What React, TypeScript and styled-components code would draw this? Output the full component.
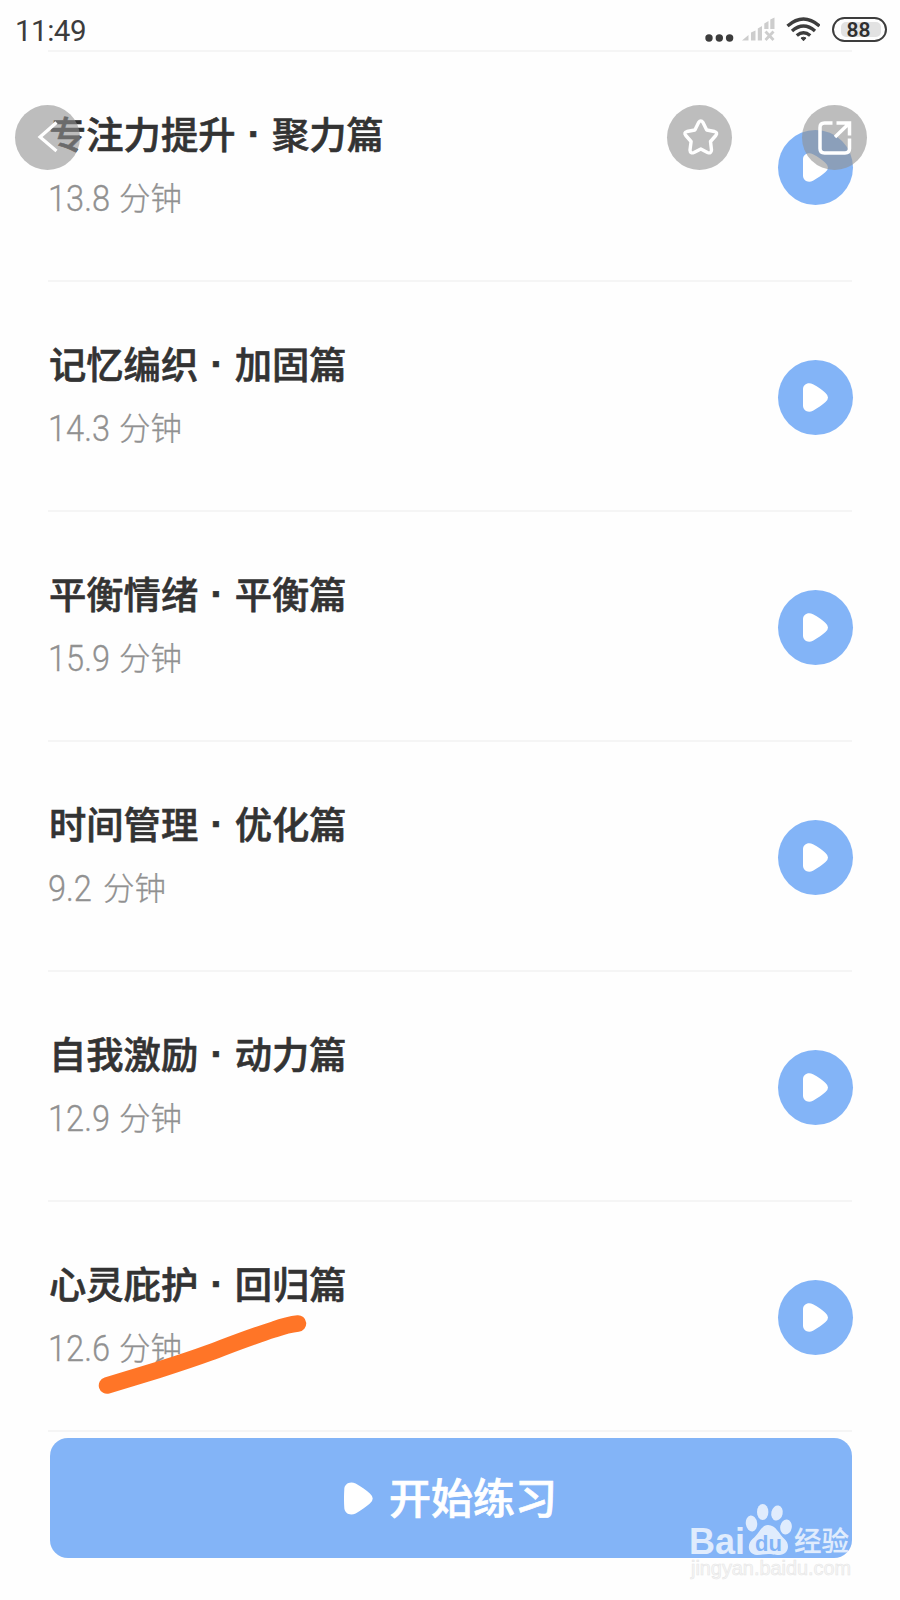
import React from "react";
import styled, { createGlobalStyle } from "styled-components";

const BLUE = "#83b4f7";

const GlobalStyle = createGlobalStyle`
  * { box-sizing: border-box; }
  body { margin: 0; background: #fefefe; }
`;

const Screen = styled.main`
  position: relative;
  width: 900px;
  height: 1600px;
  overflow: hidden;
  background: #fefefe;
  color: #333;
  font-family: Roboto, "Noto Sans CJK SC", sans-serif;
`;

const StatusBar = styled.header`
  height: 50px;
  padding: 11px 13.5px 0 15px;
  display: flex;
  justify-content: space-between;
  align-items: flex-start;
`;

const Clock = styled.time`
  font-size: 29.5px;
  line-height: 41px;
  letter-spacing: -0.5px;
  color: #3c3c3c;
`;

const StatusIcons = styled.div`
  display: flex;
  align-items: flex-start;
  padding-top: 6px;
`;

const Battery = styled.div`
  width: 55px;
  height: 25px;
  margin-left: 12px;
  border: 2.5px solid #3d3d3d;
  border-radius: 13px;
  padding: 3px 4px;
  display: flex;
`;

const Charge = styled.span`
  flex: 1;
  margin-left: 3px;
  border-radius: 5px;
  background: #e2e2e2;
  color: #303030;
  font-weight: 600;
  font-size: 21px;
  line-height: 16px;
  padding-left: 6px;
`;

const List = styled.ul`
  list-style: none;
  margin: 0 48px;
  padding: 0;
  border-bottom: 2px solid #f5f5f5;
`;

const Row = styled.li`
  height: 230px;
  border-top: 2px solid #f5f5f5;
  display: flex;
  justify-content: space-between;
  align-items: flex-start;
`;

const Info = styled.div`
  padding: 58px 0 0 1px;
`;

const Title = styled.h2`
  margin: 0;
  height: 46px;
  display: flex;
  font-size: 37.3px;
  line-height: 46px;
  font-weight: 500;
  -webkit-text-stroke: 0.6px #333;
  font-family: "Noto Sans CJK SC", sans-serif;
`;

const Dot = styled.span`
  width: 36.5px;
  padding-left: 1px;
  text-align: center;
  font-family: "Liberation Sans", sans-serif;
  font-weight: 700;
  font-size: 39px;
  line-height: 48px;
`;

const Duration = styled.p`
  margin: 20px 0 0;
  height: 40px;
  display: flex;
  font-weight: 300;
  line-height: 40px;
  color: #919191;
  -webkit-text-stroke: 0.3px #919191;
`;

const Minutes = styled.span<{ $short: boolean }>`
  margin-left: -1.5px;
  font-size: 36px;
  line-height: 46px;
  transform: scaleX(0.905);
  transform-origin: 0 50%;
  width: ${(p) => (p.$short ? 55.5 : 71.5)}px;
`;

const Unit = styled.span`
  font-family: "Noto Sans CJK SC", sans-serif;
  font-size: 31.5px;
`;

const PlayButton = styled.button`
  width: 75px;
  height: 75px;
  margin: 78px -0.5px 0 0;
  padding: 0;
  border: 0;
  border-radius: 50%;
  background: ${BLUE};
  display: grid;
  place-items: center;
`;

const Start = styled.button`
  width: 802px;
  height: 120px;
  margin: 5.5px 0 0 50px;
  padding: 0 1px 3px 0;
  border: 0;
  border-radius: 18px;
  background: ${BLUE};
  color: #fff;
  display: flex;
  justify-content: center;
  align-items: center;
  gap: 16px;
  font-family: "Noto Sans CJK SC", sans-serif;
  font-size: 42px;
  line-height: 60px;
  font-weight: 500;
  -webkit-text-stroke: 0.7px #fff;
  svg { position: relative; top: 2px; }
`;

const RoundButton = styled.button<{ $x: number }>`
  position: absolute;
  top: 105px;
  left: ${(p) => p.$x}px;
  width: 65px;
  height: 65px;
  padding: 0;
  border: 0;
  border-radius: 50%;
  background: rgba(145, 145, 145, 0.6);
  svg { display: block; }
`;

const Stroke = styled.svg`
  position: absolute;
  left: 90px;
  top: 1305px;
`;

const Watermark = styled.div`
  position: absolute;
  left: 686px;
  top: 1500px;
  width: 174px;
  height: 84px;
`;

const Tri = ({ w, h }: { w: number; h: number }) => (
  <svg width={w} height={h} viewBox="0 0 25 29">
    <path d="M0 6.5C0 1.5 5-1.2 10 1.3C15 4 19.5 7.2 22.5 10Q27.5 14.5 22.5 19C19 22 15 25 10 27.7C5 30.2 0 27.5 0 22.5Q-.5 14.5 0 6.5Z" fill="#fff" />
  </svg>
);

const lessons = [
  { name: "专注力提升", part: "聚力篇", minutes: "13.8" },
  { name: "记忆编织", part: "加固篇", minutes: "14.3" },
  { name: "平衡情绪", part: "平衡篇", minutes: "15.9" },
  { name: "时间管理", part: "优化篇", minutes: "9.2" },
  { name: "自我激励", part: "动力篇", minutes: "12.9" },
  { name: "心灵庇护", part: "回归篇", minutes: "12.6" },
];

export default function App() {
  return (
    <Screen>
      <GlobalStyle />
      <StatusBar>
        <Clock>11:49</Clock>
        <StatusIcons>
          <svg width="116" height="26" viewBox="0 0 116 26">
            <g fill="#3d3d3d">
              <circle cx="5" cy="21" r="3.7" />
              <circle cx="15.3" cy="21" r="3.7" />
              <circle cx="25.6" cy="21" r="3.7" />
            </g>
            <g fill="#cdcdcd">
              <path d="M38 23.500L44.500 18V23.500ZM47 15.500L51.500 13.500V23.500H47ZM53.800 11.500L58 9V23.500H53.800ZM60.300 6.500L64.500 4V12H60.300ZM66.300 2.500L70.500 0.500V12H66.300Z" />
              <path d="M61.500 14.500L69.500 23M69.500 14.500L61.500 23" stroke="#cdcdcd" strokeWidth="2.8" />
            </g>
            <g fill="none" stroke="#3d3d3d" strokeWidth="3.4">
              <path d="M83.500 9Q99.500 -5 115.500 9" />
              <path d="M88 14Q99.500 4 111 14" />
              <path d="M92.800 18.500Q99.500 12.800 106.200 18.500" />
            </g>
            <path d="M97 21Q99.500 19.500 102 21L99.500 23.800Z" fill="#3d3d3d" stroke="#3d3d3d" />
          </svg>
          <Battery><Charge>88</Charge></Battery>
        </StatusIcons>
      </StatusBar>

      <List>
        {lessons.map((l) => (
          <Row key={l.name}>
            <Info>
              <Title>
                <span>{l.name}</span>
                <Dot>·</Dot>
                <span>{l.part}</span>
              </Title>
              <Duration>
                <Minutes $short={l.minutes.length < 4}>{l.minutes}</Minutes>
                <Unit>分钟</Unit>
              </Duration>
            </Info>
            <PlayButton aria-label="播放"><Tri w={25} h={29} /></PlayButton>
          </Row>
        ))}
      </List>
      <Start><Tri w={29} h={33} /><span>开始练习</span></Start>

      <RoundButton $x={15} aria-label="返回">
        <svg width="65" height="65" fill="none" stroke="#fff" strokeWidth="3.2">
          <path d="M41.500 17.500L25 32L41.500 46" />
        </svg>
      </RoundButton>
      <RoundButton $x={667.4} aria-label="收藏">
        <svg width="65" height="65" fill="none" stroke="#fff" strokeWidth="3.4" strokeLinejoin="round">
          <path d="M31.600 17.500Q33.800 14.300 36 17.500L39.700 25L47.500 26.500Q51 27.700 48.800 30.500L43.500 36.500L44.500 45Q44.300 49 40.500 47.500L33.800 44L27 47.500Q23.300 49 23 45L24.100 36.500L18.800 30.500Q16.500 27.700 20 26.500L27.900 25Z" />
        </svg>
      </RoundButton>
      <RoundButton $x={802.4} aria-label="分享">
        <svg width="65" height="65" fill="none" stroke="#fff" strokeWidth="3.5">
          <path d="M30.500 18H22.500Q18 18 18 22.500V43.500Q18 48 22.500 48H43Q47.500 48 47.500 43.500V33.500M34.500 18H47.500V30.500M47 18.500L33 32" />
        </svg>
      </RoundButton>

      <Stroke width="230" height="100" fill="none">
        <path d="M17 80.500L68 65C90 58 105 53 120 47.500C140 40 160 32 184 24.500Q198 19.500 208 18.500" stroke="#ff7527" strokeWidth="16.500" strokeLinecap="round" />
      </Stroke>

      <Watermark>
        <svg width="174" height="84" viewBox="-4 0 174 84">
          <g fill="#fff" fillOpacity=".75">
            <text x="-1" y="54" fontFamily="Liberation Sans, sans-serif" fontWeight="700" fontSize="37" textLength="56" lengthAdjust="spacingAndGlyphs">Bai</text>
            <ellipse cx="61.500" cy="23.500" rx="5.700" ry="8" transform="rotate(-8 61.500 23.500)" />
            <ellipse cx="72.700" cy="12" rx="5.700" ry="8" />
            <ellipse cx="87" cy="13" rx="5.700" ry="7.600" transform="rotate(12 87 13)" />
            <ellipse cx="96" cy="27" rx="5.800" ry="7.500" transform="rotate(8 96 27)" />
            <path d="M78 25C86 25 89 34 94.500 39C101 45 98 55 89 55C84 55 82 54 78.500 54C75 54 71 55 67 55C57 54 57 44 62.500 39C69 34 71 25 78 25Z" />
            <text x="104" y="51" fontFamily="Noto Sans CJK SC, sans-serif" fontWeight="500" fontSize="27.500" stroke="#fff" strokeOpacity=".3" strokeWidth=".5">经验</text>
          </g>
          <text x="65" y="51" fill={BLUE} fontFamily="Liberation Sans, sans-serif" fontWeight="700" fontSize="22">du</text>
          <text x="1" y="75" fill="#f7f7f7" stroke="#e6e6e6" strokeWidth=".6" fontFamily="Liberation Sans, sans-serif" fontSize="20" textLength="160" lengthAdjust="spacingAndGlyphs">jingyan.baidu.com</text>
        </svg>
      </Watermark>
    </Screen>
  );
}
